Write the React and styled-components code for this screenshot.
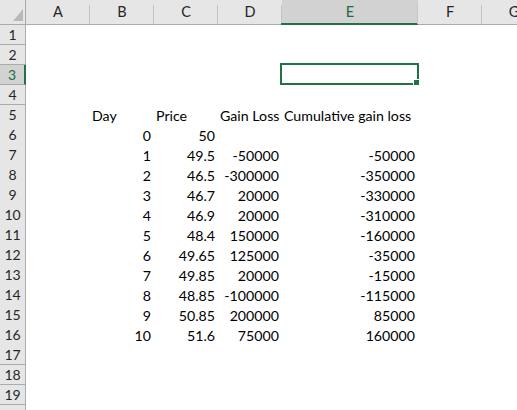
import styled, { createGlobalStyle } from 'styled-components';

const GlobalStyle = createGlobalStyle`
  html, body {
    margin: 0;
    padding: 0;
    background: #ffffff;
  }
`;

const COLUMNS = '26px 64px 64px 64px 64px 136px 64px 64px';

const Sheet = styled.div`
  width: 517px;
  height: 410px;
  overflow: hidden;

  background-color: #ffffff;
  font-family: Lato, 'Liberation Sans', sans-serif;
`;

const HeaderRow = styled.div`
  height: 25px;
  display: grid;
  grid-template-columns: ${COLUMNS};

  box-sizing: border-box;
  border-bottom: 1px solid #ababab;
  background-color: #e6e6e6;
`;

const Corner = styled.div`
  position: relative;
  box-sizing: border-box;
  border-right: 1px solid #ababab;

  svg {
    position: absolute;
    left: 13px;
    top: 9px;
  }
`;

const ColHeader = styled.div`
  position: relative;

  display: flex;
  justify-content: center;
  align-items: center;

  background-color: ${(p) => (p.$active ? '#d2d2d2' : '#e6e6e6')};
  color: ${(p) => (p.$active ? '#1e6b41' : '#262626')};
  font-size: 14.5px;
  line-height: 1;

  &::after {
    content: '';
    position: absolute;
    right: 0;
    top: 5px;
    bottom: 0;
    width: 1px;
    background-color: #c4c4c4;
  }

  &::before {
    content: '';
    display: ${(p) => (p.$active ? 'block' : 'none')};
    position: absolute;
    left: -1px;
    right: 0;
    bottom: -1px;
    height: 2px;
    background-color: #217346;
  }
`;

const Row = styled.div`
  height: 20px;
  display: grid;
  grid-template-columns: ${COLUMNS};
`;

const RowHeader = styled.div`
  display: flex;
  justify-content: center;
  align-items: center;

  box-sizing: border-box;
  border-bottom: 1px solid #ababab;
  border-right: ${(p) => (p.$active ? '2px solid #217346' : '1px solid #ababab')};

  background-color: ${(p) => (p.$active ? '#d2d2d2' : '#e6e6e6')};
  color: ${(p) => (p.$active ? '#1e6b41' : '#262626')};
  font-size: 14px;
  line-height: 1;
`;

const Cell = styled.div`
  position: relative;
  padding: 0 3px 0 2px;

  color: #000000;
  font-size: 14.2px;
  line-height: 21px;
  white-space: nowrap;
  text-align: ${(p) => (p.$left ? 'left' : 'right')};
`;

const Selection = styled.div`
  position: absolute;
  left: -2px;
  top: -2px;
  right: -1px;
  bottom: 0;

  border: 2px solid #217346;
  pointer-events: none;
`;

const Handle = styled.div`
  position: absolute;
  right: -3px;
  bottom: -3px;
  width: 5px;
  height: 5px;

  border: 1px solid #ffffff;
  background-color: #217346;
`;

const LETTERS = ['A', 'B', 'C', 'D', 'E', 'F', 'G'];

const data = [
  [0, 50, '', ''],
  [1, 49.5, -50000, -50000],
  [2, 46.5, -300000, -350000],
  [3, 46.7, 20000, -330000],
  [4, 46.9, 20000, -310000],
  [5, 48.4, 150000, -160000],
  [6, 49.65, 125000, -35000],
  [7, 49.85, 20000, -15000],
  [8, 48.85, -100000, -115000],
  [9, 50.85, 200000, 85000],
  [10, 51.6, 75000, 160000],
];

const buildRows = () => {
  const rows = [];
  for (let n = 1; n <= 20; n++) {
    let cells = ['', '', '', '', '', '', ''];
    let left = false;
    if (n === 5) {
      cells = ['', 'Day', 'Price', 'Gain Loss', 'Cumulative gain loss', '', ''];
      left = true;
    } else if (n >= 6 && n <= 16) {
      const d = data[n - 6];
      cells = ['', d[0], d[1], d[2], d[3], '', ''];
    }
    rows.push({ n, cells, left });
  }
  return rows;
};

const App = () => {
  const rows = buildRows();

  return (
    <>
      <GlobalStyle />
      <Sheet>
        <HeaderRow>
          <Corner>
            <svg width="10" height="13" viewBox="0 0 10 13">
              <polygon points="10,0 10,12 0,12" fill="#b9b9b9" />
            </svg>
          </Corner>
          {LETTERS.map((l) => (
            <ColHeader key={l} $active={l === 'E'}>
              {l}
            </ColHeader>
          ))}
        </HeaderRow>

        {rows.map((r) => (
          <Row key={r.n}>
            <RowHeader $active={r.n === 3}>{r.n}</RowHeader>
            {r.cells.map((c, i) => (
              <Cell key={i} $left={r.left}>
                {c}
                {r.n === 3 && i === 4 && (
                  <Selection>
                    <Handle />
                  </Selection>
                )}
              </Cell>
            ))}
          </Row>
        ))}
      </Sheet>
    </>
  );
};

export default App;
